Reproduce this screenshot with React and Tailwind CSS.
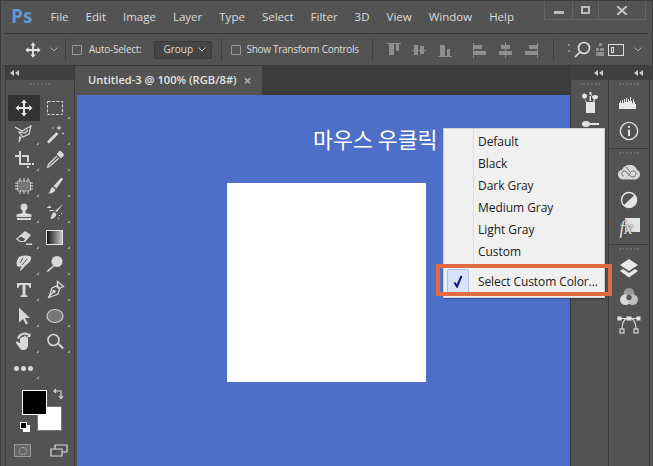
import React from 'react'

const Svg = ({ children, size = 20, className = '' }) => (
    <svg width={size} height={size} viewBox="0 0 20 20" className={className} fill="#d8d8d8">{children}</svg>
)

const MoveIcon = ({ size = 20 }) => (
    <Svg size={size}>
        <path d="M9 5h2v4h4V7l3.500 3L15 13v-2h-4v4h2l-3 3.500L7 15h2v-4H5v2l-3.500-3L5 7v2h4V5H7l3-3.500L13 5h-2z" fill="#e4e4e4" />
    </Svg>
)

const Chevrons = () => (
    <svg width="9" height="6" viewBox="0 0 9 6" fill="#cfcfcf"><path d="M4 0v6L0 3zM9 0v6L5 3z" /></svg>
)

const tools = [
    [<MoveIcon />, <Svg><rect x="2.500" y="3.500" width="15" height="13" fill="none" stroke="#d8d8d8" strokeDasharray="3 1.500" /></Svg>],
    [<svg width="20" height="20" viewBox="0 0 20 20" fill="none" stroke="#d8d8d8" strokeWidth="1.200"><path d="M1 3l7 4 9-5-2 8-6 3-4-5 6 1 3-3M7 13l-2 5 1-6" /></svg>,
     <Svg><path d="M2.500 17l9-9 2 2-9 9c-1 .8-2.800-1-2-2z" /><path d="M14 1l.7 2.300 2.300.7-2.300.7L14 7l-.7-2.300L11 4l2.300-.7zM18 8l.4 1.100 1.100.4-1.100.4-.4 1.100-.4-1.100-1.100-.4 1.100-.4zM8 3l.3.8.8.3-.8.3-.3.8-.3-.8-.8-.3.8-.3z" /></Svg>],
    [<Svg><path d="M5 1h2v12h10v2H5V7H1V5h4zm3 4h7v7h-2V7H8zM18 13h2v2h-2zM13 16h2v2h-2z" /></Svg>,
     <svg width="20" height="20" viewBox="0 0 20 20" fill="none" stroke="#d8d8d8"><path d="M12 6L3.500 14.500c-.5 1-.5 1.500-1 2.500 1 0 1.500-.5 2.500-1L14 8" strokeWidth="1.300" /><path d="M14 1.500c1.500-.8 3.500 1.500 4.500 3 .5 1-.5 2-1.500 2l-1 1.500-4-4 1.500-1z" fill="#d8d8d8" /></svg>],
    [<Svg><rect x="3.500" y="5" width="13" height="10" rx="1" fill="#777" stroke="#e0e0e0" strokeDasharray="1.500 1" /><path d="M1 7h3M1 10h3M1 13h3M16 7h3M16 10h3M16 13h3M6 2v3M10 2v3M14 2v3M6 15v3M10 15v3M14 15v3" stroke="#e0e0e0" /></Svg>,
     <Svg><path d="M16.500 1.500l1.500 1.500-6.500 9.500-3-2.500zM7.500 11l3 2.500c-1 3-4 4.500-7.500 4 2.200-1 2-3 3-5z" /></Svg>],
    [<Svg><circle cx="10" cy="5" r="3.500" /><path d="M8.500 8h3v3l6 1.500V15h-15v-2.500l6-1.500zM3 16h14v2H3z" /></Svg>,
     <Svg><path d="M18 2l-6 8-2-1zM9 10l2.500 2c-.5 3-3.500 5-6 5 1-2 1-5.500 3.500-7z" /><path d="M1.500 6h5l-2-2.500zM4 8h4l2 1H5z" /><path d="M14 13h1v1h-1zM16 11h1v1h-1zM13 16h1v1h-1z" /></Svg>],
    [<svg width="20" height="20" viewBox="0 0 20 20"><path d="M11 3l6 4-6 7H6l-4-3z" fill="#d8d8d8" /><path d="M2.800 11L7 8l5 3-2.500 2.500H6.300z" fill="#535353" stroke="#d8d8d8" /><path d="M12 15.500h6v1.500h-6z" fill="#d8d8d8" /></svg>,
     <svg width="20" height="20" viewBox="0 0 20 20"><defs><linearGradient id="grad"><stop stopColor="#111" /><stop offset="1" stopColor="#ccc" /></linearGradient></defs><rect x="1.500" y="2.500" width="16" height="14" fill="url(#grad)" stroke="#e4e4e4" /></svg>],
    [<Svg><path d="M5 3c4-2 10-2 12 0 1 3-2 6-5 8-2 2-4 5-6 6 0-2 1-4 2-5-2 1-3 1-5 0-1-3 0-7 2-9z" /><path d="M9 4l-3 5M13 5l-5 6" stroke="#535353" /></Svg>,
     <Svg><circle cx="12" cy="7.500" r="5.500" /><path d="M8 11.500l1 1-6 5.500-1.500-1z" /></Svg>],
    [<Svg><path d="M3 3h14v5h-1.500c-.2-2-1-3-2.500-3h-1.500v10l2 .6V17h-7v-1.400l2-.6V5H7c-1.500 0-2.300 1-2.500 3H3z" /></Svg>,
     <svg width="20" height="20" viewBox="0 0 20 20" fill="none" stroke="#d8d8d8" strokeWidth="1.300"><path d="M12.500 1.500l6 5-3.500 1.500-2 6-9 3.500 3-9.500 5.500-2.500z" /><path d="M3 17.500l5-5" /><circle cx="9" cy="11.500" r="1" fill="#d8d8d8" /><path d="M11 5.500l3.500 3" strokeWidth="2" /></svg>],
    [<Svg><path d="M5 1.500v15l4-3.500 3 5.500 2-1-3-5.500h5z" /></Svg>,
     <Svg><ellipse cx="10" cy="10" rx="8" ry="6.500" fill="#777" stroke="#cfcfcf" strokeWidth="1.200" /></Svg>],
    [<Svg><path d="M8 8V5.500a1 1 0 012 0V8V4.500a1 1 0 012 0V8.500V6a1 1 0 012 0v7c0 3-2 5-5 5-2 0-3-1-4-3l-3-4c-.5-1 .8-2 1.800-1L6 11V6.500a1 1 0 012 0z" /><path d="M3 6a8 8 0 0112-4l1.500-1v4h-4l1.500-1.500A6 6 0 005 7z" /></Svg>,
     <Svg><circle cx="8.500" cy="8" r="5.500" fill="none" stroke="#d8d8d8" strokeWidth="1.600" /><path d="M12.500 12l1.300-1.300 5 5-1.500 1.500z" /></Svg>],
]

const Corner = () => <span className="absolute right-[1px] bottom-[2px] w-0 h-0 border-l-[3px] border-l-transparent border-b-[3px] border-b-[#a0a0a0]" />

function ToolBar() {
    return (
        <div className="w-[70px] h-full border-r border-l border-[#3a3a3a] flex flex-col">
            <div className="h-[14px] bg-[#404040] flex items-center pl-[4px]"><Chevrons /></div>
            <div className="h-[3px] mt-[3px] mx-auto w-[20px] border-t-2 border-dotted border-[#6a6a6a]" />
            <div className="grid grid-cols-2 pl-[2px] pr-[3px] mt-[9px]">
                {tools.flat().map((icon, i) => (
                    <div key={i} className={`relative h-[26px] flex items-center justify-center ${i === 0 ? 'bg-[#333333]' : ''}`}>
                        {icon}
                        {i > 0 && <Corner />}
                    </div>
                ))}
                <div className="relative h-[26px] flex items-center justify-center gap-[2px]">
                    <span className="w-[5px] h-[5px] rounded-full bg-[#d8d8d8]" />
                    <span className="w-[5px] h-[5px] rounded-full bg-[#d8d8d8]" />
                    <span className="w-[5px] h-[5px] rounded-full bg-[#d8d8d8]" />
                    <Corner />
                </div>
            </div>
            <div className="relative h-[50px] mt-[5px]">
                <div className="absolute left-[31px] top-[20px] w-[25px] h-[25px] bg-white border border-[#777]" />
                <div className="absolute left-[16px] top-[4px] w-[25px] h-[25px] bg-black border border-white" />
                <svg width="12" height="12" viewBox="0 0 12 12" className="absolute left-[47px] top-[2px]" fill="none" stroke="#d8d8d8" strokeWidth="1.200"><path d="M1 3h7v7M3 1L1 3l2 2M6 8l2 2.500L10 8" /></svg>
                <div className="absolute left-[14px] top-[36px] w-[7px] h-[7px] bg-black border border-white z-10" />
                <div className="absolute left-[17px] top-[39px] w-[7px] h-[7px] bg-white" />
            </div>
            <div className="flex items-center justify-between pl-[8px] pr-[6px] mt-[8px]">
                <div className="w-[17px] h-[13px] border border-[#999] flex items-center justify-center bg-[#666]">
                    <span className="w-[8px] h-[8px] rounded-full border border-dotted border-[#ccc]" />
                </div>
                <svg width="18" height="13" viewBox="0 0 18 13" fill="none" stroke="#d8d8d8" strokeWidth="1.200"><path d="M1 5h11v7H1zM5 5V1h12v7h-5" /></svg>
            </div>
        </div>
    )
}

function OptionsBar() {
    return (
        <div className="h-[33px] mx-[4px] border-y border-[#3a3a3a] flex items-center text-[10px] text-[#dcdcdc] shrink-0">
            <div className="ml-[20px]"><MoveIcon size={18} /></div>
            <svg width="8" height="5" viewBox="0 0 8 5" className="ml-[8px]" fill="none" stroke="#aaa"><path d="M.5.5L4 4 7.500.5" /></svg>
            <span className="w-px h-[22px] bg-[#3f3f3f] ml-[7px]" />
            <span className="w-[10px] h-[10px] border border-[#999] rounded-[1px] ml-[6px]" />
            <span className="ml-[7px] tracking-[-0.25px]">Auto-Select:</span>
            <div className="w-[58px] h-[18px] ml-[13px] bg-[#454545] border border-[#3a3a3a] rounded-[2px] flex items-center justify-between pl-[8px] pr-[5px]">
                Group
                <svg width="8" height="5" viewBox="0 0 8 5" fill="none" stroke="#ccc"><path d="M.5.5L4 4 7.500.5" /></svg>
            </div>
            <span className="w-px h-[22px] bg-[#3f3f3f] ml-[9px]" />
            <span className="w-[10px] h-[10px] border border-[#999] rounded-[1px] ml-[9px]" />
            <span className="ml-[5px] tracking-[-0.28px]">Show Transform Controls</span>
            <span className="w-px h-[22px] bg-[#3f3f3f] ml-[13px]" />
            <svg width="153" height="20" viewBox="0 0 153 20" className="ml-[13px]" fill="#8f8f8f">
                <path d="M1 3h14v1H1zM3 4h5v11H3zM10 4h3v7h-3z" />
                <path d="M28 5h4v10h-4zM34 6h4v8h-4zM26 10h14v1H26z" />
                <path d="M52 16h14v1H52zM54 5h5v11h-5zM61 9h3v7h-3z" />
                <path d="M87 3h1v15h-1zM88 5h8v4h-8zM88 11h12v4H88z" />
                <path d="M119 2h1v16h-1zM115 5h9v4h-9zM113 11h13v4h-13z" />
                <path d="M151 3h1v15h-1zM143 5h8v4h-8zM139 11h12v4h-12z" />
            </svg>
            <span className="w-px h-[22px] bg-[#3f3f3f] ml-[14px]" />
            <svg width="4" height="14" viewBox="0 0 4 14" className="ml-[13px]" fill="#8f8f8f"><path d="M1 1h2v2H1zM1 7h2v2H1z" /></svg>
            <svg width="20" height="20" viewBox="0 0 20 20" className="ml-[2px]" fill="none" stroke="#dcdcdc" strokeWidth="1.700"><circle cx="11" cy="8" r="5.500" /><path d="M7 12l-5 5" /></svg>
            <svg width="10" height="14" viewBox="0 0 10 14" className="ml-[2px]" fill="#8f8f8f"><path d="M4 0h3v3H4zM1 5h3v3H1zM5 5h4v3H5zM1 9h8v4H1z" /></svg>
            <div className="w-[16px] h-[12px] border border-[#dcdcdc] ml-[3px] flex items-center pl-[2px]">
                <span className="w-[3px] h-[6px] border border-[#dcdcdc]" />
            </div>
            <svg width="8" height="5" viewBox="0 0 8 5" className="ml-[10px]" fill="none" stroke="#aaa"><path d="M.5.5L4 4 7.500.5" /></svg>
        </div>
    )
}

const Grip = () => <div className="h-[3px] w-[20px] mx-auto mt-[3px] border-t-2 border-dotted border-[#707070]" />

function Dock() {
    return (
        <div className="w-[83px] shrink-0 flex flex-col bg-[#535353]">
            <div className="h-[14px] bg-[#404040] flex items-center pl-[24px] gap-[31px]">
                <Chevrons />
                <Chevrons />
            </div>
            <div className="flex-1 flex">
                <div className="w-[39px] border-r border-l border-[#3a3a3a]">
                    <Grip />
                    <div className="flex justify-center mt-[6px]">
                        <svg width="18" height="21" viewBox="0 0 18 21" fill="#e4e4e4"><path d="M5 10h9v11H5z" /><circle cx="3.500" cy="4" r="2.500" /><path d="M3 6l3 4H5zM8.500 9h1.500V3H8.500zM8.500 0h2v4h-2z" /><ellipse cx="14" cy="5" rx="3" ry="2" /><path d="M13 7l-1 3h1l1.500-3z" /></svg>
                    </div>
                    <svg width="22" height="8" viewBox="0 0 22 8" className="mx-auto mt-[7px]" fill="#e4e4e4"><ellipse cx="7" cy="4" rx="4" ry="3" /><path d="M11 3h9v2h-9z" /></svg>
                </div>
                <div className="w-[41px] border-r border-[#3a3a3a] flex flex-col">
                    <div className="h-[69px] border-b border-[#3a3a3a] flex flex-col items-center">
                        <Grip />
                        <svg width="20" height="12" viewBox="0 0 20 12" className="mt-[11px]" fill="#e8e8e8"><path d="M0 12V6h1V4h1v2h1V3h1v3h1V2h1v3h1V1h1v4h1V2h1v2h1V0h1v4h1v2h1V2h1v3h1v2h1v5z" /></svg>
                        <svg width="20" height="20" viewBox="0 0 22 22" className="mt-[12px]" fill="none" stroke="#e0e0e0" strokeWidth="1.500"><circle cx="11" cy="11" r="9.500" /><path d="M11 9.500v7" strokeWidth="2.200" /><path d="M11 5.500v2" strokeWidth="2.200" /></svg>
                    </div>
                    <div className="h-[96px] border-b border-[#3a3a3a] flex flex-col items-center">
                        <Grip />
                        <svg width="22" height="16" viewBox="0 0 22 16" className="mt-[9px]" fill="#d8d8d8"><path d="M5 15.500C1 15.500 0 12 0 10c0-3 2-4 4-4 1-3 4-5 8-5 4 0 6 2 7 5 2 1 3 2 3 4 0 3-2 5.500-5 5.500z" /><path d="M6 12c-3 0-3-5 0-5 3 0 6 6 9 6s4-5 1-6-4 3-6 5M8 3l4 5" fill="none" stroke="#666" strokeWidth="0.900" /></svg>
                        <svg width="18" height="18" viewBox="0 0 18 18" className="mt-[11px]"><circle cx="9" cy="9" r="7.500" fill="#535353" stroke="#e4e4e4" strokeWidth="1.500" /><path d="M14.500 4A7.500 7.500 0 013.500 14.500z" fill="#e4e4e4" /></svg>
                        <div className="relative mt-[9px] w-[21px] h-[20px]">
                            <div className="absolute right-0 top-0 w-[15px] h-[14px] bg-[#e4e4e4]" />
                            <span className="absolute left-[1px] top-[1px] font-['Liberation_Serif',serif] italic text-[18px] leading-[19px] text-[#e4e4e4] [text-shadow:0_0_2px_#535353,0_0_2px_#535353]">fx</span>
                        </div>
                    </div>
                    <div className="flex flex-col items-center">
                        <Grip />
                        <svg width="20" height="19" viewBox="0 0 20 19" className="mt-[8px]" fill="#e8e8e8"><path d="M10 0l9 6-9 6-9-6z" /><path d="M1 12l3-2 6 4 6-4 3 2-9 6.500z" /></svg>
                        <svg width="18" height="17" viewBox="0 0 20 19" className="mt-[10px]"><circle cx="10" cy="6" r="6" fill="#9a9a9a" /><circle cx="6" cy="13" r="6" fill="#d8d8d8" /><circle cx="14" cy="13" r="6" fill="#bdbdbd" /><circle cx="10" cy="10.500" r="3" fill="#555" /></svg>
                        <svg width="24" height="18" viewBox="0 0 24 18" className="mt-[11px]" fill="none" stroke="#e0e0e0" strokeWidth="1.100"><path d="M2 2.500h20M9 2.500C6 5 5 9 5 13M15 2.500c3 2.500 4 6.500 4 10.500" /><rect x="10" y="1" width="4" height="3" fill="#e0e0e0" /><rect x="1" y="1" width="3" height="3" fill="#e0e0e0" /><rect x="20" y="1" width="3" height="3" fill="#e0e0e0" /><rect x="3" y="13" width="4" height="4" /><rect x="17" y="13" width="4" height="4" /></svg>
                    </div>
                </div>
            </div>
        </div>
    )
}

function ContextMenu() {
    return (
        <div className="absolute left-[366px] top-[33px] w-[162px] bg-[#f0f0f0] text-[#1a1a1a] text-[12px] border border-[#d0d0d0] shadow-[1px_1px_2px_rgba(0,0,0,0.3)]">
            <div className="flex flex-col pt-[2px] ml-[29px] border-l border-[#dcdcdc]">
                {['Default', 'Black', 'Dark Gray', 'Medium Gray', 'Light Gray', 'Custom'].map(item => (
                    <div key={item} className="h-[22px] leading-[22px] pl-[4px] tracking-[-0.05px]">{item}</div>
                ))}
            </div>
            <div className="h-[34px] flex items-center">
                <div className="w-[22px] h-[24px] ml-[3px] mt-[2px] bg-[#d9e3f7] border border-[#a9bfe6] rounded-[2px] flex items-center justify-center">
                    <svg width="10" height="13" viewBox="0 0 10 13" fill="none" stroke="#101080" strokeWidth="2"><path d="M1.500 7.500L4 11.500 8.500 1" /></svg>
                </div>
                <span className="ml-[9px] mt-[4px] tracking-[-0.1px]">Select Custom Color...</span>
            </div>
            <div className="absolute left-[-8px] top-[135px] w-[176px] h-[32px] border-[4px] border-[#e06a42]" />
        </div>
    )
}

export default function App() {
    return (
        <div className="w-[653px] h-[466px] bg-[#535353] flex flex-col overflow-hidden font-['Open_Sans','Liberation_Sans',sans-serif] border-t border-[#3a3a3a] shadow-[inset_1px_0_0_#3a3a3a,inset_-1px_0_0_#3a3a3a]">
            <div className="h-[32px] shrink-0 flex items-start text-[#dcdcdc]">
                <span className="ml-[11px] mt-[2px] text-[#6496d0] text-[19px] leading-[26px] font-bold">Ps</span>
                <div className="flex ml-[18px] gap-[17px] text-[11.500px] leading-[32px]">
                    {['File', 'Edit', 'Image', 'Layer', 'Type', 'Select', 'Filter', '3D', 'View', 'Window', 'Help'].map(m => <span key={m}>{m}</span>)}
                </div>
                <div className="ml-auto mr-[7px] w-[102px] h-[19px] border border-t-0 border-[#666] flex">
                    <div className="w-[28px] border-r border-[#666] flex items-center justify-center">
                        <span className="w-[10px] h-[3px] bg-[#bbb] mt-[4px]" />
                    </div>
                    <div className="w-[26px] border-r border-[#666] flex items-center justify-center">
                        <span className="w-[9px] h-[8px] border-2 border-[#bbb]" />
                    </div>
                    <div className="flex-1 flex items-center justify-center">
                        <svg width="10" height="9" viewBox="0 0 10 9" stroke="#c8c8c8" strokeWidth="2"><path d="M0 0l10 9M10 0L0 9" /></svg>
                    </div>
                </div>
            </div>
            <OptionsBar />
            <div className="flex-1 flex min-h-0">
                <div className="w-[5px] shrink-0" />
                <ToolBar />
                <div className="flex-1 flex flex-col min-w-0 ml-[2px] bg-[#3c3c3c]">
                    <div className="h-[29px] shrink-0 flex">
                        <div className="w-[185px] bg-[#535353] flex items-center pl-[11px] gap-[7px] text-[#e4e4e4] text-[11.150px] font-semibold">
                            Untitled-3 @ 100% (RGB/8#)
                            <span className="text-[#aaa] text-[14px] leading-none font-bold">×</span>
                        </div>
                    </div>
                    <div className="relative flex-1 bg-[#4e6fc8] pl-[150px] pt-[88px]">
                        <div className="w-[199px] h-[199px] bg-white" />
                        <span className="absolute left-[236px] top-[28px] text-white text-[21.700px] leading-[32px] font-['Noto_Sans_CJK_KR',sans-serif] font-normal">마우스 우클릭</span>
                        <ContextMenu />
                    </div>
                </div>
                <Dock />
            </div>
        </div>
    )
}
